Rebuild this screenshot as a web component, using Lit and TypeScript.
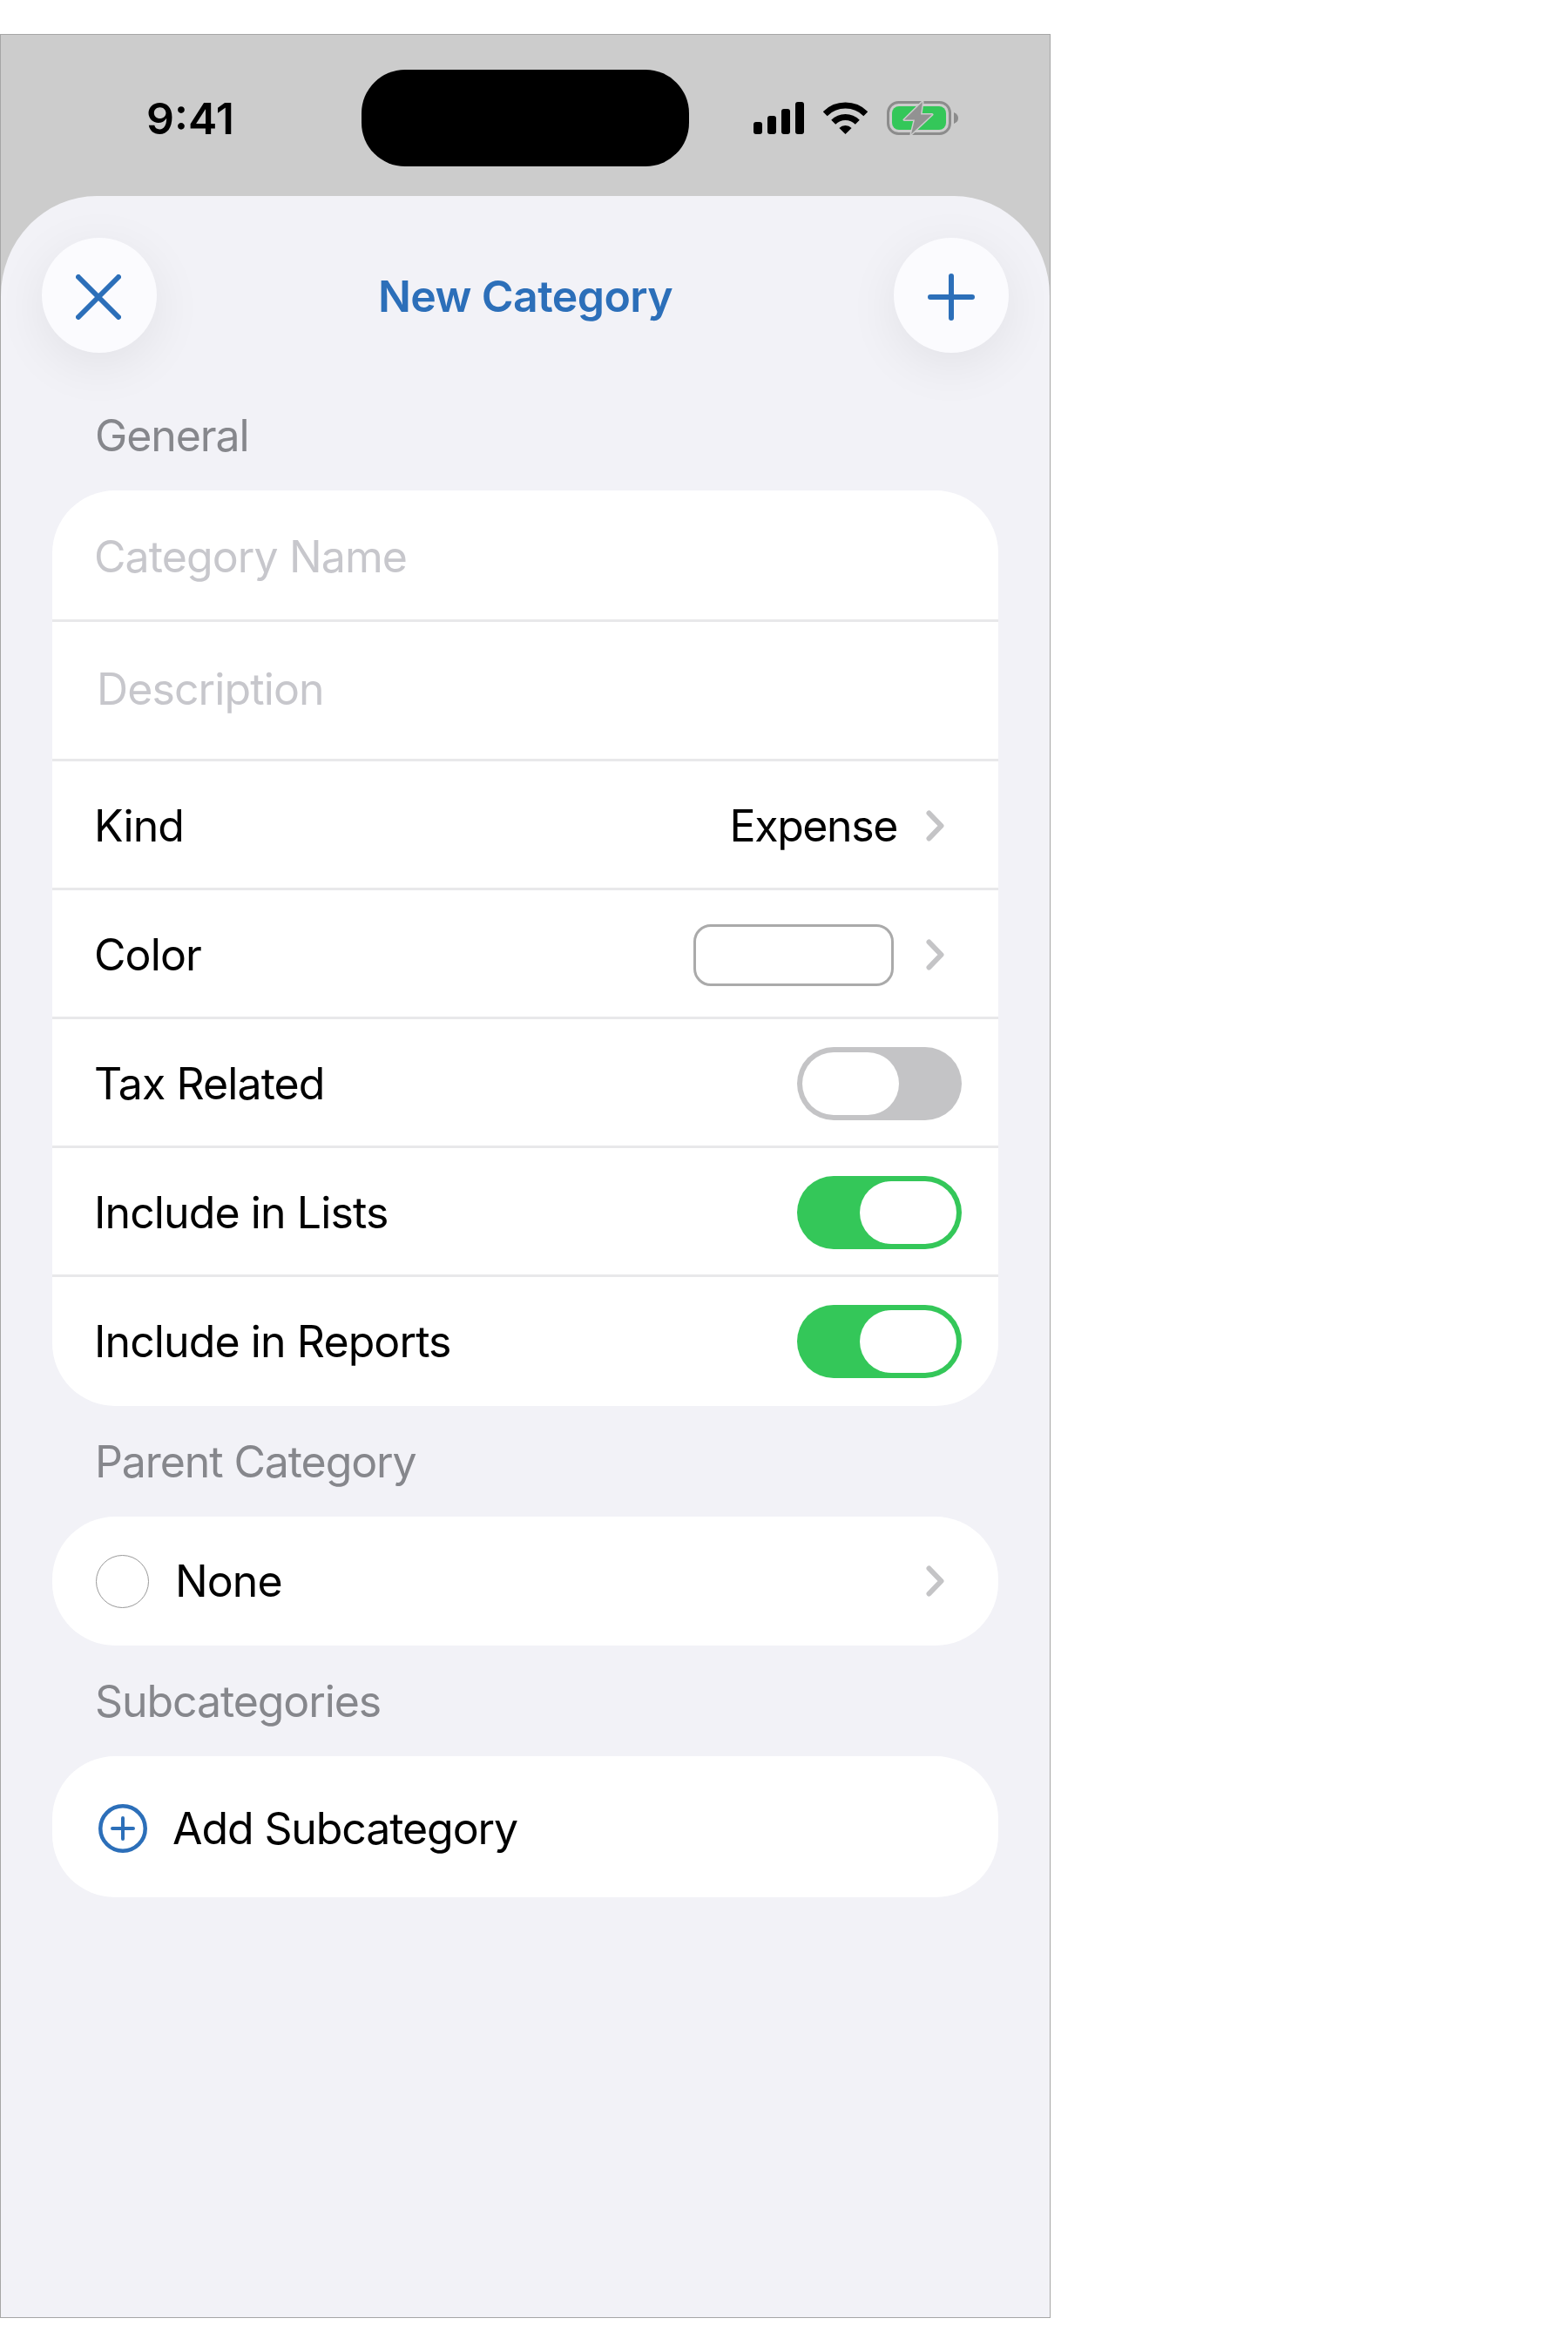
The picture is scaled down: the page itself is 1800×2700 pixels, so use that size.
import { LitElement, html, css, svg } from 'lit';
import { customElement, property } from 'lit/decorators.js';

const chevron = html`<svg class="chevron" width="21" height="36" viewBox="0 0 21 36">
  <path d="M3.5 3.5 L17.5 18 L3.5 32.5" fill="none" stroke="#c4c4c6" stroke-width="6" stroke-linecap="round" stroke-linejoin="round"/>
</svg>`;

const signal = html`<svg width="58" height="37" viewBox="0 0 58 37">
  ${[[0, 14], [16, 21], [32, 29], [48, 37]].map(([x, h]) => svg`<rect x=${x} y=${37 - h} width="10" height=${h} rx="3"/>`)}
</svg>`;

const wifi = html`<svg width="51" height="37" viewBox="0 0 51 37">
  <path d="M2.2 13.7 A33 33 0 0 1 48.8 13.7" fill="none" stroke="#000" stroke-width="7"/>
  <path d="M11.7 23.2 A19.5 19.5 0 0 1 39.3 23.2" fill="none" stroke="#000" stroke-width="7"/>
  <path d="M25.5 37 L18.4 29.9 A10 10 0 0 1 32.6 29.9 Z"/>
</svg>`;

const battery = html`<svg width="82" height="39" viewBox="0 0 82 39">
  <rect x="1.5" y="1.5" width="71" height="36" rx="12" fill="none" stroke="#8c8c8c" stroke-width="3"/>
  <rect x="6" y="6" width="62" height="27" rx="8" fill="#34c759"/>
  <path d="M77 13 Q82 15 82 19.5 Q82 24 77 26 Z" fill="#8c8c8c"/>
  <path d="M41 1 L20 21.5 H32 L28 38 L52 15.5 H39 Z" fill="#929292" stroke="#cccccc" stroke-width="3" stroke-linejoin="round" paint-order="stroke"/>
</svg>`;

@customElement('ios-toggle')
export class IosToggle extends LitElement {
  static styles = css`
    :host {
      display: block;
    }
    .track {
      width: 189px;
      height: 84px;
      box-sizing: border-box;
      padding: 6px;
      border-radius: 42px;
      background-color: #c4c4c6;
      display: flex;
      justify-content: flex-start;
    }
    .track.on {
      background-color: #34c759;
      justify-content: flex-end;
    }
    .thumb {
      width: 111px;
      height: 72px;
      border-radius: 36px;
      background-color: #fff;
    }
  `;

  @property({ type: Boolean }) on = false;

  render() {
    return html`<div class="track ${this.on ? 'on' : ''}"><div class="thumb"></div></div>`;
  }
}

@customElement('app-root')
export class AppRoot extends LitElement {
  static styles = css`
    :host {
      display: block;
      padding-top: 39px;
      font-family: Inter, "Liberation Sans", sans-serif;
      font-size: 50px;
      letter-spacing: -0.9px;
      color: #000;
    }
    .phone {
      width: 1206px;
      height: 2622px;
      box-sizing: border-box;
      border: 1px solid #a6a6a6;
      background-color: #ccc;
      display: flex;
      flex-direction: column;
    }
    .status {
      height: 185px;
      flex: none;
      box-sizing: border-box;
      padding: 40px 0 34px 167px;
      display: flex;
      align-items: center;
    }
    .time {
      width: 100px;
      font-weight: 600;
      letter-spacing: 0;
      margin-right: 147px;
      white-space: nowrap;
    }
    .island {
      width: 376px;
      height: 111px;
      border-radius: 50px;
      background-color: #000;
      margin-right: 74px;
    }
    .status-icons {
      display: flex;
      align-items: center;
      gap: 22px;
    }
    .sheet {
      flex: 1;
      background-color: #f2f2f7;
      border-radius: 110px 110px 0 0 / 115px 115px 0 0;
    }
    header {
      display: flex;
      align-items: center;
      justify-content: space-between;
      padding: 48px 47px 0;
    }
    .round {
      width: 132px;
      height: 132px;
      border-radius: 50%;
      background-color: #fbfbfe;
      box-shadow: 0 14px 60px rgba(0, 0, 0, 0.07);
      display: flex;
      align-items: center;
      justify-content: center;
    }
    .round svg {
      margin-top: 3px;
    }
    .round .close {
      margin-right: 2px;
    }
    h1 {
      margin: 0;
      padding-top: 1px;
      font-size: 50px;
      font-weight: 600;
      letter-spacing: -0.6px;
      color: #2c6fb9;
    }
    .section {
      margin: 34px 0 33px 108px;
      line-height: 60px;
      letter-spacing: -1.1px;
      color: #86878c;
    }
    .section.first {
      margin-top: 65px;
    }
    .card {
      margin: 0 59px;
      background-color: #fff;
      border-radius: 72px;
      overflow: hidden;
    }
    .row {
      height: 148px;
      box-sizing: border-box;
      padding: 3px 62px 0 48px;
      display: flex;
      align-items: center;
      border-bottom: 3px solid #e8e8ea;
    }
    .row:last-child {
      border-bottom: none;
      padding-top: 0;
    }
    .row.switch {
      padding-right: 42px;
    }
    .row > .grow {
      flex: 1;
    }
    .name {
      height: 151px;
    }
    .description {
      height: 160px;
      padding-left: 51px;
      padding-top: 0;
      padding-bottom: 3px;
    }
    .placeholder {
      color: #c7c7cc;
    }
    .value {
      margin-right: 33px;
      letter-spacing: -1.4px;
    }
    .swatch {
      width: 230px;
      height: 71px;
      box-sizing: border-box;
      border: 3px solid #aaa;
      border-radius: 20px;
      margin-right: 37px;
    }
    .radio {
      width: 61px;
      height: 61px;
      box-sizing: border-box;
      border: 1px solid #999;
      border-radius: 50%;
      margin-right: 30px;
    }
    .parent {
      padding-left: 50px;
    }
    .row.add {
      height: 162px;
      padding-left: 53px;
      padding-top: 3px;
      letter-spacing: -1.1px;
    }
    .add svg {
      margin-right: 29px;
    }
  `;

  render() {
    return html`
      <div class="phone">
        <div class="status">
          <div class="time">9:41</div>
          <div class="island"></div>
          <div class="status-icons">${signal}${wifi}${battery}</div>
        </div>
        <div class="sheet">
          <header>
            <div class="round">
              <svg class="close" width="52" height="52" viewBox="0 0 52 52">
                <path d="M3 3 L49 49 M49 3 L3 49" stroke="#2c6fb9" stroke-width="6" stroke-linecap="round"/>
              </svg>
            </div>
            <h1>New Category</h1>
            <div class="round">
              <svg width="54" height="54" viewBox="0 0 54 54">
                <path d="M27 3 V51 M3 27 H51" stroke="#2c6fb9" stroke-width="6" stroke-linecap="round"/>
              </svg>
            </div>
          </header>

          <div class="section first">General</div>
          <div class="card">
            <div class="row name"><span class="placeholder">Category Name</span></div>
            <div class="row description"><span class="placeholder">Description</span></div>
            <div class="row">
              <span class="grow">Kind</span>
              <span class="value">Expense</span>
              ${chevron}
            </div>
            <div class="row">
              <span class="grow">Color</span>
              <div class="swatch"></div>
              ${chevron}
            </div>
            <div class="row switch"><span class="grow">Tax Related</span><ios-toggle></ios-toggle></div>
            <div class="row switch"><span class="grow">Include in Lists</span><ios-toggle on></ios-toggle></div>
            <div class="row switch"><span class="grow">Include in Reports</span><ios-toggle on></ios-toggle></div>
          </div>

          <div class="section">Parent Category</div>
          <div class="card">
            <div class="row parent">
              <div class="radio"></div>
              <span class="grow">None</span>
              ${chevron}
            </div>
          </div>

          <div class="section">Subcategories</div>
          <div class="card">
            <div class="row add">
              <svg width="56" height="56" viewBox="0 0 56 56">
                <circle cx="28" cy="28" r="25.75" fill="none" stroke="#2c6fb9" stroke-width="4.5"/>
                <path d="M28 16 V40 M16 28 H40" stroke="#2c6fb9" stroke-width="4" stroke-linecap="round"/>
              </svg>
              <span>Add Subcategory</span>
            </div>
          </div>
        </div>
      </div>
    `;
  }
}
